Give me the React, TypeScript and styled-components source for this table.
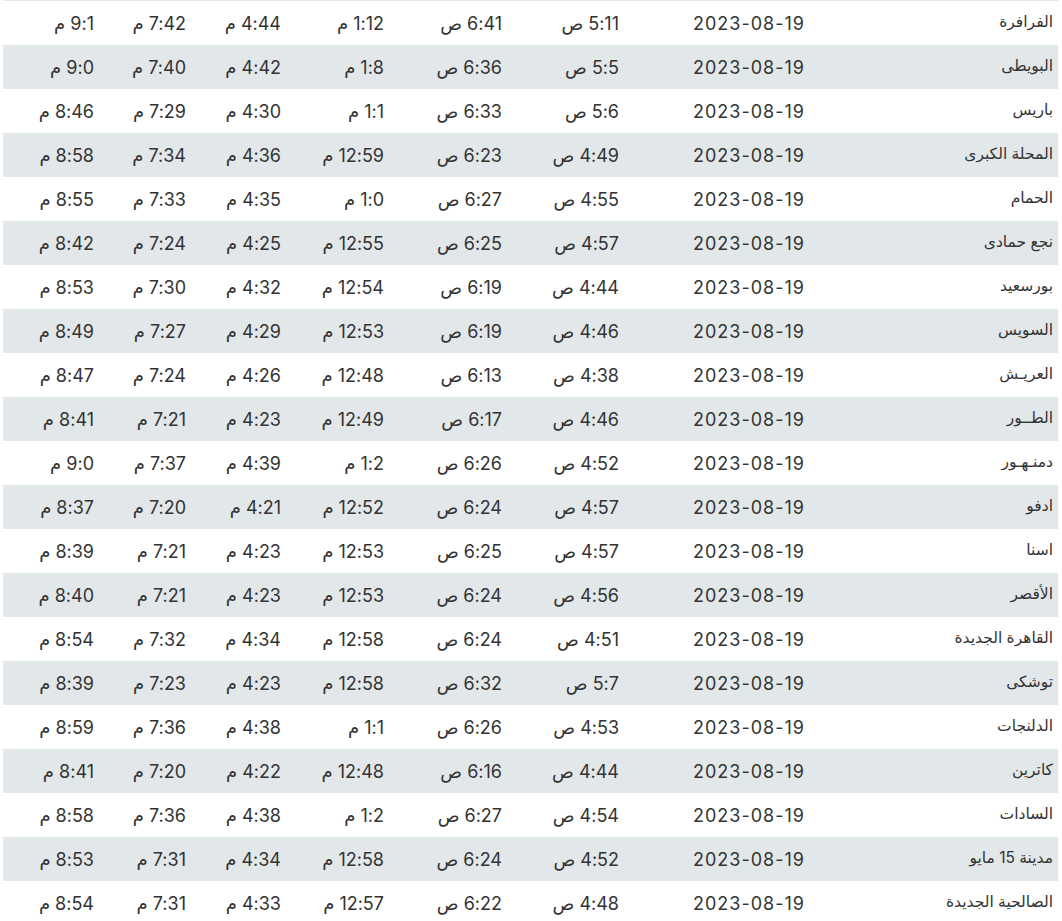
import React from 'react'
import styled, { createGlobalStyle } from 'styled-components'

const GlobalStyle = createGlobalStyle`
    html, body {
        margin: 0;
        padding: 0;
        background: #ffffff;
    }
`

const rows: string[][] = [
    ['الفرافرة', '5:11 ص', '6:41 ص', '1:12 م', '4:44 م', '7:42 م', '9:1 م'],
    ['البويطى', '5:5 ص', '6:36 ص', '1:8 م', '4:42 م', '7:40 م', '9:0 م'],
    ['باريس', '5:6 ص', '6:33 ص', '1:1 م', '4:30 م', '7:29 م', '8:46 م'],
    ['المحلة الكبرى', '4:49 ص', '6:23 ص', '12:59 م', '4:36 م', '7:34 م', '8:58 م'],
    ['الحمام', '4:55 ص', '6:27 ص', '1:0 م', '4:35 م', '7:33 م', '8:55 م'],
    ['نجع حمادى', '4:57 ص', '6:25 ص', '12:55 م', '4:25 م', '7:24 م', '8:42 م'],
    ['بورسعيد', '4:44 ص', '6:19 ص', '12:54 م', '4:32 م', '7:30 م', '8:53 م'],
    ['السويس', '4:46 ص', '6:19 ص', '12:53 م', '4:29 م', '7:27 م', '8:49 م'],
    ['العريـش', '4:38 ص', '6:13 ص', '12:48 م', '4:26 م', '7:24 م', '8:47 م'],
    ['الطــور', '4:46 ص', '6:17 ص', '12:49 م', '4:23 م', '7:21 م', '8:41 م'],
    ['دمنـهـور', '4:52 ص', '6:26 ص', '1:2 م', '4:39 م', '7:37 م', '9:0 م'],
    ['ادفو', '4:57 ص', '6:24 ص', '12:52 م', '4:21 م', '7:20 م', '8:37 م'],
    ['اسنا', '4:57 ص', '6:25 ص', '12:53 م', '4:23 م', '7:21 م', '8:39 م'],
    ['الأقصر', '4:56 ص', '6:24 ص', '12:53 م', '4:23 م', '7:21 م', '8:40 م'],
    ['القاهرة الجديدة', '4:51 ص', '6:24 ص', '12:58 م', '4:34 م', '7:32 م', '8:54 م'],
    ['توشكى', '5:7 ص', '6:32 ص', '12:58 م', '4:23 م', '7:23 م', '8:39 م'],
    ['الدلنجات', '4:53 ص', '6:26 ص', '1:1 م', '4:38 م', '7:36 م', '8:59 م'],
    ['كاترين', '4:44 ص', '6:16 ص', '12:48 م', '4:22 م', '7:20 م', '8:41 م'],
    ['السادات', '4:54 ص', '6:27 ص', '1:2 م', '4:38 م', '7:36 م', '8:58 م'],
    ['مدينة 15 مايو', '4:52 ص', '6:24 ص', '12:58 م', '4:34 م', '7:31 م', '8:53 م'],
    ['الصالحية الجديدة', '4:48 ص', '6:22 ص', '12:57 م', '4:33 م', '7:31 م', '8:54 م'],
]

const DATE = '2023-08-19'

const App = () => {
    return (
        <>
            <GlobalStyle />
            <Page>
                <Table>
                    {rows.map((r, i) => (
                        <Row key={i} $shaded={i % 2 === 1}>
                            <City>{r[0]}</City>
                            <DateCell>{DATE}</DateCell>
                            {r.slice(1).map((t, j) => (
                                <Cell key={j}>{t}</Cell>
                            ))}
                        </Row>
                    ))}
                </Table>
            </Page>
        </>
    )
}

export default App

const Page = styled.div`
    width: 1062px;
    height: 921px;
    overflow: hidden;
    background: #ffffff;
`
const Table = styled.div`
    margin-left: 3px;
    width: 1055px;
    direction: rtl;
    border-top: 1px solid #e2e7ea;
    display: flex;
    flex-direction: column;
`
const Row = styled.div<{ $shaded: boolean }>`
    display: grid;
    grid-template-columns: 248px 186px 117px 118px 103px 95px 92px 96px;
    height: 44px;
    align-items: center;
    background-color: ${p => (p.$shaded ? '#e2e7ea' : '#ffffff')};
`
const Cell = styled.div`
    padding-right: 5px;
    text-align: right;
    white-space: nowrap;
    color: #333333;
    font-family: Inter, "DejaVu Sans", sans-serif;
    font-size: 18px;
    letter-spacing: 0.6px;
`
const DateCell = styled(Cell)`
    letter-spacing: 1px;
`
const City = styled(Cell)`
    font-size: 15.5px;
    letter-spacing: 0;
    padding-bottom: 3px;
`
